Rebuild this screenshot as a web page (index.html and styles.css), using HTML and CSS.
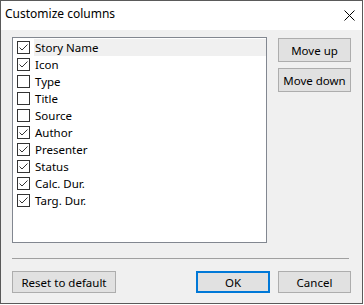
FILE: index.html
```html
<!DOCTYPE html>
<html lang="en">
<head>
    <meta charset="UTF-8">
    <title>Customize columns</title>
    <link rel="stylesheet" href="styles.css">
</head>
<body>
    <div class="window">
        <div class="titlebar">
            <span class="title">Customize columns</span>
            <svg class="close" width="11" height="11" viewBox="0 0 11 11">
                <path d="M0.5 0.5 L10.5 10.5 M10.5 0.5 L0.5 10.5" stroke="#000" stroke-width="1" fill="none"/>
            </svg>
        </div>
        <div class="content">
            <div class="main">
                <div class="list">
                    <div class="row selected"><span class="box checked"></span><span class="label">Story Name</span></div>
                    <div class="row"><span class="box checked"></span><span class="label">Icon</span></div>
                    <div class="row"><span class="box"></span><span class="label">Type</span></div>
                    <div class="row"><span class="box"></span><span class="label">Title</span></div>
                    <div class="row"><span class="box"></span><span class="label">Source</span></div>
                    <div class="row"><span class="box checked"></span><span class="label">Author</span></div>
                    <div class="row"><span class="box checked"></span><span class="label">Presenter</span></div>
                    <div class="row"><span class="box checked"></span><span class="label">Status</span></div>
                    <div class="row"><span class="box checked"></span><span class="label">Calc. Dur.</span></div>
                    <div class="row"><span class="box checked"></span><span class="label">Targ. Dur.</span></div>
                </div>
                <div class="side">
                    <button class="btn">Move up</button>
                    <button class="btn">Move down</button>
                </div>
            </div>
            <div class="separator"></div>
            <div class="footer">
                <button class="btn reset">Reset to default</button>
                <div class="spacer"></div>
                <button class="btn ok">OK</button>
                <button class="btn">Cancel</button>
            </div>
        </div>
    </div>
</body>
</html>
```
FILE: styles.css
```css
body {
    margin: 0;
    background: #ffffff;
    font-family: "Noto Sans", "Open Sans", sans-serif;
    font-size: 11.5px;
    color: #000;
}
.window {
    box-sizing: border-box;
    width: 363px;
    height: 304px;
    border: 1px solid #5a5a5a;
    display: flex;
    flex-direction: column;
    background: #f0f0f0;
}
.titlebar {
    height: 29px;
    background: #fff;
    display: flex;
    align-items: center;
    padding: 0 7px 0 4px;
}
.title {
    flex: 1;
    font-size: 12px;
    margin-top: -4px;
}
.close {
    margin-top: -1px;
}
.content {
    flex: 1;
    padding: 7px 11px 0 11px;
}
.main {
    display: flex;
    gap: 11px;
}
.list {
    box-sizing: border-box;
    width: 255px;
    height: 206px;
    border: 1px solid #828790;
    background: #fff;
    padding: 1px 0 0 0;
}
.row {
    height: 17px;
    display: flex;
    align-items: center;
    padding-left: 4px;
}
.row.selected .label {
    background: #f0f0f0;
    flex: 1;
}
.box {
    box-sizing: border-box;
    width: 13px;
    height: 13px;
    border: 1px solid #333;
    background: #fff;
    margin-right: 4px;
    flex-shrink: 0;
}
.box.checked {
    background: #fff url("data:image/svg+xml;utf8,<svg xmlns='http://www.w3.org/2000/svg' width='11' height='11'><polyline points='1.5,5.5 4,8 9.5,2.5' stroke='%23333' stroke-width='1' fill='none'/></svg>") no-repeat center;
}
.label {
    height: 17px;
    line-height: 17px;
    padding-left: 1px;
    white-space: nowrap;
}
.side {
    display: flex;
    flex-direction: column;
    gap: 6px;
    padding-top: 1px;
}
.btn {
    box-sizing: border-box;
    height: 24px;
    width: 73px;
    background: #e1e1e1;
    border: 1px solid #adadad;
    font-family: inherit;
    font-size: 11.5px;
    color: #000;
    padding: 0;
    margin: 0;
}
.separator {
    margin-top: 15px;
    width: 337px;
    height: 1px;
    background: #a0a0a0;
}
.footer {
    margin-top: 12px;
    display: flex;
    gap: 8px;
    width: 339px;
}
.footer .btn {
    height: 22px;
}
.reset {
    width: 104px;
}
.spacer {
    flex: 1;
}
.ok {
    width: 74px;
    border: 2px solid #0078d7;
}
```
